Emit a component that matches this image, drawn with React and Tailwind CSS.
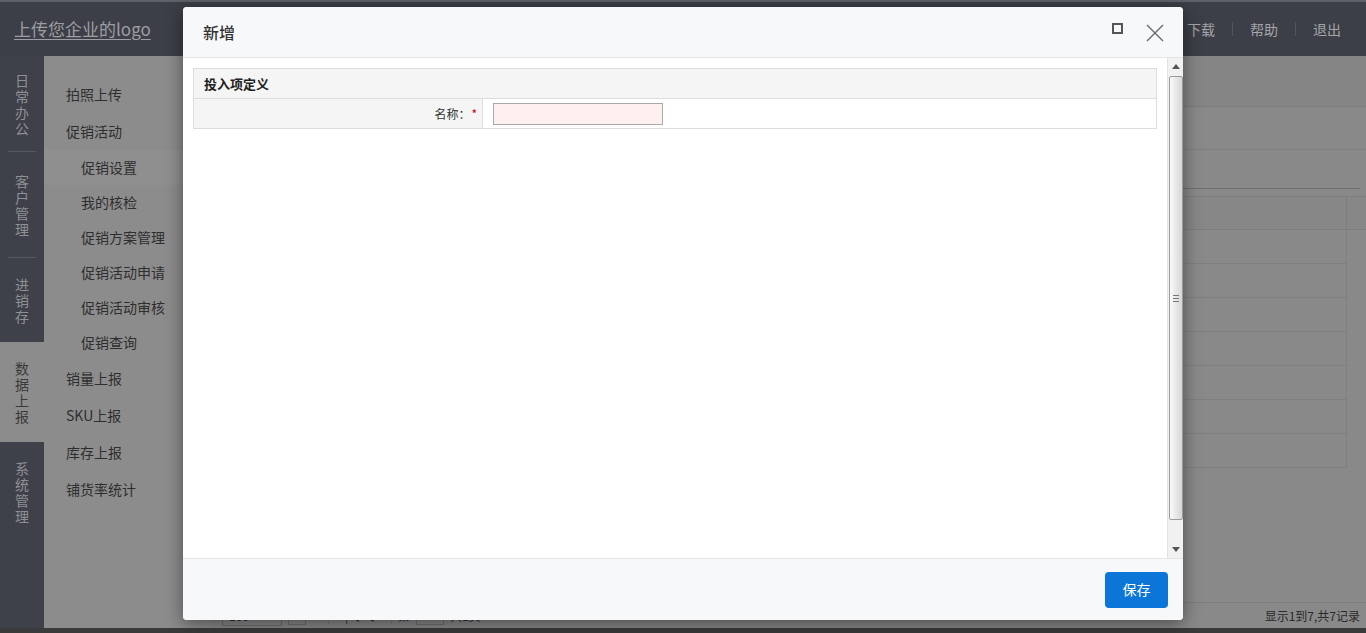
import React from 'react';

const sideGroups = [
  { label: '日常办公', h: 'h-[96px]', sep: true },
  { label: '客户管理', h: 'h-[106px]', sep: true },
  { label: '进销存', h: 'h-[84px]', sep: false },
  { label: '数据上报', h: 'h-[100px]', active: true },
  { label: '系统管理', h: 'h-[100px]', sep: false },
];

const subMenu = [
  { label: '拍照上传', level: 1 },
  { label: '促销活动', level: 1 },
  { label: '促销设置', level: 2, active: true },
  { label: '我的核检', level: 2 },
  { label: '促销方案管理', level: 2 },
  { label: '促销活动申请', level: 2 },
  { label: '促销活动审核', level: 2 },
  { label: '促销查询', level: 2 },
  { label: '销量上报', level: 1 },
  { label: 'SKU上报', level: 1 },
  { label: '库存上报', level: 1 },
  { label: '铺货率统计', level: 1 },
];

const App = () => {
  return (
    <div className="relative w-[1366px] h-[633px] overflow-hidden bg-[#898989] font-['Noto_Sans_CJK_SC',sans-serif]">
      {/* Top bar */}
      <div className="h-[56px] bg-[#3c3f47] border-t-[2px] border-[#5e6169] flex items-center justify-between">
        <span className="pl-[14px] text-[17px] leading-[24px] text-[#9c9ea3] underline underline-offset-[3px]">
          上传您企业的logo
        </span>
        <div className="flex items-center pr-[8px] text-[14px] text-[#a3a5a9]">
          {['上传', '下载', '帮助', '退出'].map((t, i) => (
            <div key={t} className="flex items-center">
              {i > 0 && <span className="w-px h-[14px] bg-[#52555d]" />}
              <span className="px-[17px] leading-[20px]">{t}</span>
            </div>
          ))}
        </div>
      </div>

      <div className="flex h-[572px]">
        {/* Left icon column */}
        <div className="w-[44px] bg-[#3e4149] flex flex-col shrink-0">
          {sideGroups.map((g) => (
            <div
              key={g.label}
              className={`${g.h} relative flex items-center justify-center ${g.active ? 'bg-[#8c8c8c] text-[#3a3a3a]' : 'text-[#8e9095]'}`}
            >
              <span className="w-[14px] text-[14px] leading-[16px] break-all text-center">{g.label}</span>
              {g.sep && <span className="absolute bottom-0 left-[8px] w-[28px] h-px bg-[#55585f]" />}
            </div>
          ))}
        </div>

        {/* Sub menu */}
        <div className="w-[166px] shrink-0 bg-[#8c8c8c] pt-[20px] flex flex-col text-[14px] text-[#2e2e2e]">
          {subMenu.map((m) => (
            <div
              key={m.label}
              className={`flex items-center ${m.level === 1 ? 'h-[37px] pl-[22px]' : 'h-[35px] pl-[37px]'} ${m.active ? 'bg-[#8f8f8f]' : ''}`}
            >
              {m.label}
            </div>
          ))}
        </div>

        {/* Main content (dimmed) */}
        <div className="flex-1 flex flex-col">
          <div className="h-[51px] bg-[#858585] border-b border-[#7c7c7c]" />
          <div className="h-[43px] border-b border-[#7f7f7f]" />
          <div className="h-[39px] pr-[6px]">
            <div className="h-full border-b border-[#6f6f6f]" />
          </div>
          <div className="mt-[7px] flex flex-col">
            <div className="h-[34px] bg-[#878787] border-y border-[#7d7d7d] flex">
              <div className="flex-1 border-r border-[#7d7d7d]" />
              <div className="w-[19px]" />
            </div>
            {Array.from({ length: 7 }).map((_, i) => (
              <div key={i} className="h-[34px] flex">
                <div className="flex-1 border-b border-r border-[#7f7f7f]" />
                <div className="w-[19px]" />
              </div>
            ))}
          </div>
          <div className="flex-1" />
          <div className="h-[26px] border-t border-[#7c7c7c] flex items-center justify-between pr-[6px]">
            <div className="flex items-center gap-[6px] pl-[12px] text-[12px] text-[#2e2e2e]">
              <span className="w-[60px] h-[20px] border border-[#6e6e6e] px-[6px] leading-[18px]">100</span>
              <span className="w-[18px] h-[18px] border border-[#6e6e6e]" />
              <span className="w-px h-[18px] bg-[#7a7a7a] ml-[16px]" />
              <span className="px-[10px]">|◀ ◀</span>
              <span className="w-px h-[18px] bg-[#7a7a7a]" />
              <span>第</span>
              <span className="w-[28px] h-[18px] border border-[#6e6e6e]" />
              <span>共1页</span>
            </div>
            <span className="text-[12px] text-[#2a2a2a] leading-[16px]">显示1到7,共7记录</span>
          </div>
        </div>
      </div>
      <div className="h-[5px] bg-[#3a3a3a]" />

      {/* Modal */}
      <div className="absolute left-[183px] top-[7px] w-[1000px] h-[613px] rounded-[4px] overflow-hidden bg-white shadow-[0_4px_18px_rgba(0,0,0,0.45)] flex flex-col">
        <div className="h-[51px] shrink-0 bg-[#f7f8fa] border-b border-[#e5e5e5] flex items-center justify-between pl-[20px] pr-[18px]">
          <span className="text-[16px] leading-[22px] font-medium text-[#333]">新增</span>
          <div className="flex items-center gap-[22px]">
            <span className="w-[11px] h-[11px] border-2 border-[#555] -mt-[8px]" />
            <svg width="20" height="20" viewBox="0 0 20 20" className="mt-[2px]">
              <path d="M2 2 L18 18 M18 2 L2 18" stroke="#6b6b6b" strokeWidth="1.4" fill="none" />
            </svg>
          </div>
        </div>

        <div className="flex-1 flex min-h-0">
          <div className="flex-1 p-[10px]">
            <div className="border border-[#dddddd]">
              <div className="h-[30px] bg-[#f5f5f5] border-b border-[#dddddd] flex items-center pl-[10px] text-[13px] font-bold text-[#222]">
                投入项定义
              </div>
              <div className="h-[29px] flex">
                <div className="w-[289px] bg-[#f5f5f5] border-r border-[#dddddd] flex items-center justify-end pr-[5px] text-[12px] text-[#333]">
                  名称：<span className="text-[#cc0000] ml-[1px]">*</span>
                </div>
                <div className="flex-1 flex items-center pl-[10px]">
                  <input className="w-[170px] h-[22px] bg-[#fff0f0] border border-[#a9a9a9] outline-none" />
                </div>
              </div>
            </div>
          </div>

          {/* Scrollbar */}
          <div className="w-[16px] shrink-0 bg-[#f1f1f1] border-l border-[#e3e3e3] flex flex-col items-center">
            <div className="h-[17px] flex items-center justify-center">
              <svg width="8" height="5" viewBox="0 0 8 5"><path d="M0 5 L4 0 L8 5 Z" fill="#555" /></svg>
            </div>
            <div className="w-[14px] h-[444px] mt-[1px] rounded-[2px] border border-[#9c9c9c] bg-gradient-to-r from-[#fafafa] to-[#d6d6d6] flex items-center justify-center">
              <div className="flex flex-col gap-[2px]">
                <span className="w-[6px] h-px bg-[#777]" />
                <span className="w-[6px] h-px bg-[#777]" />
                <span className="w-[6px] h-px bg-[#777]" />
              </div>
            </div>
            <div className="flex-1" />
            <div className="h-[17px] flex items-center justify-center">
              <svg width="8" height="5" viewBox="0 0 8 5"><path d="M0 0 L4 5 L8 0 Z" fill="#555" /></svg>
            </div>
          </div>
        </div>

        <div className="h-[62px] shrink-0 bg-[#f7f8fa] border-t border-[#e5e5e5] flex items-center justify-end pr-[15px]">
          <button className="w-[63px] h-[36px] rounded-[4px] bg-[#0b76d8] text-white text-[14px]">保存</button>
        </div>
      </div>
    </div>
  );
};

export default App;
